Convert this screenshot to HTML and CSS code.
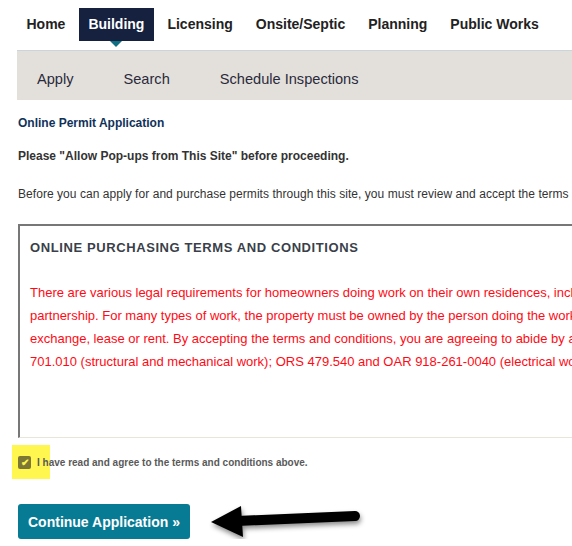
FILE: index.html
```html
<!DOCTYPE html>
<html lang="en">
<head>
    <meta charset="UTF-8">
    <meta name="viewport" content="width=device-width, initial-scale=1">
    <title>Online Permit Application</title>
    <link rel="stylesheet" href="styles.css">
</head>
<body>

<div class="mainNav">
    <a class="navItem" href="#">Home</a>
    <a class="navItem active" href="#">Building</a>
    <a class="navItem" href="#">Licensing</a>
    <a class="navItem" href="#">Onsite/Septic</a>
    <a class="navItem" href="#">Planning</a>
    <a class="navItem" href="#">Public Works</a>
</div>

<div class="page">
    <div class="subNav">
        <a class="subItem" href="#">Apply</a>
        <a class="subItem" href="#">Search</a>
        <a class="subItem" href="#">Schedule Inspections</a>
    </div>

    <div class="content">
        <h2 class="pageTitle">Online Permit Application</h2>
        <p class="popupNote">Please "Allow Pop-ups from This Site" before proceeding.</p>
        <p class="intro">Before you can apply for and purchase permits through this site, you must review and accept the terms and conditions below.</p>

        <div class="termsBox">
            <h3 class="termsTitle">ONLINE PURCHASING TERMS AND CONDITIONS</h3>
            <p class="termsText">There are various legal requirements for homeowners doing work on their own residences, including<br>
            partnership. For many types of work, the property must be owned by the person doing the work and not intended for sale,<br>
            exchange, lease or rent. By accepting the terms and conditions, you are agreeing to abide by all applicable laws, including ORS<br>
            701.010 (structural and mechanical work); ORS 479.540 and OAR 918-261-0040 (electrical work); ORS 447.040 (plumbing work).</p>
        </div>

        <label class="agree">
            <span class="highlight"><span class="checkBox">&#10004;</span></span>
            I have read and agree to the terms and conditions above.
        </label>

        <div class="actions">
            <button class="continueBtn">Continue Application &raquo;</button>
            <!-- pointer arrow drawn over the page -->
            <svg class="pointer" width="160" height="50" viewBox="0 0 160 50">
                <defs>
                    <filter id="shadow" x="-20%" y="-40%" width="140%" height="180%">
                        <feDropShadow dx="1" dy="3" stdDeviation="2.5" flood-color="#000" flood-opacity="0.45"/>
                    </filter>
                </defs>
                <g filter="url(#shadow)">
                    <line x1="28" y1="23" x2="146" y2="18" stroke="#000" stroke-width="10" stroke-linecap="round"/>
                    <polygon points="2,24 32,8 34,39" fill="#000"/>
                </g>
            </svg>
        </div>
    </div>
</div>

</body>
</html>
```

FILE: styles.css
```css
html, body {
    margin: 0;
    padding: 0;
    overflow-x: hidden;
    background: #fff;
    font-family: "Liberation Sans", Arial, sans-serif;
    color: #333;
}

.mainNav {
    display: flex;
    padding: 8px 0 0 15px;
    height: 33px;
    white-space: nowrap;
}

.navItem {
    position: relative;
    display: flex;
    align-items: center;
    padding: 0 11.5px 1px 11.5px;
    font-size: 14px;
    font-weight: bold;
    color: #222;
    text-decoration: none;
}

.navItem.active {
    margin: 0 2px;
    padding: 0 9.5px 1px 9.5px;
    background: #15213f;
    color: #fff;
}

.navItem.active:after {
    content: "";
    position: absolute;
    left: 50%;
    bottom: -6px;
    margin-left: -6px;
    border-left: 6px solid transparent;
    border-right: 6px solid transparent;
    border-top: 6px solid #0f6f82;
}

.page {
    padding: 9px 0 0 17px;
}

.subNav {
    display: flex;
    align-items: center;
    background: #e3e0dc;
    border-top: 1px solid #c9d5da;
    padding: 6px 0 0 20px;
    box-sizing: border-box;
    height: 50px;
    white-space: nowrap;
}

.subItem {
    font-size: 14.6px;
    color: #2a2a3a;
    text-decoration: none;
    margin-right: 50px;
}

.content {
    padding-left: 1px;
    width: 900px;
}

.pageTitle {
    margin: 16px 0 0;
    font-size: 12px;
    font-weight: bold;
    color: #10325a;
}

.popupNote {
    margin: 19px 0 0;
    font-size: 12px;
    font-weight: bold;
    color: #333;
}

.intro {
    margin: 24px 0 0;
    font-size: 12px;
    letter-spacing: 0.05px;
    color: #333;
    white-space: nowrap;
}

.termsBox {
    margin-top: 23px;
    height: 211px;
    border-top: 2px solid #777;
    border-left: 2px solid #777;
    border-bottom: 1px solid #e8e5d9;
    padding: 0 10px;
}

.termsTitle {
    margin: 14px 0 0;
    font-size: 13px;
    font-weight: bold;
    letter-spacing: 0.6px;
    color: #3a3f4a;
}

.termsText {
    margin: 26px 0 0;
    font-size: 13px;
    line-height: 23px;
    color: #ff0a14;
    white-space: nowrap;
}

.agree {
    display: flex;
    align-items: center;
    margin-top: 7px;
    margin-left: -6px;
    font-size: 10px;
    font-weight: bold;
    color: #5a5a5a;
}

.highlight {
    display: flex;
    align-items: center;
    width: 38px;
    height: 34px;
    padding-left: 6px;
    box-sizing: border-box;
    background: #fff650;
    margin-right: -13px;
}

.checkBox {
    display: inline-flex;
    align-items: center;
    justify-content: center;
    width: 13px;
    height: 13px;
    border-radius: 2px;
    background: #7d7735;
    color: #fff650;
    font-size: 10px;
}

.actions {
    position: relative;
    margin-top: 25px;
}

.continueBtn {
    height: 35px;
    padding: 0 10px;
    border: none;
    border-radius: 3px;
    background: #077b93;
    color: #fff;
    font-family: "Liberation Sans", Arial, sans-serif;
    font-size: 14px;
    font-weight: bold;
}

.pointer {
    position: absolute;
    left: 191px;
    top: -6px;
}
```
